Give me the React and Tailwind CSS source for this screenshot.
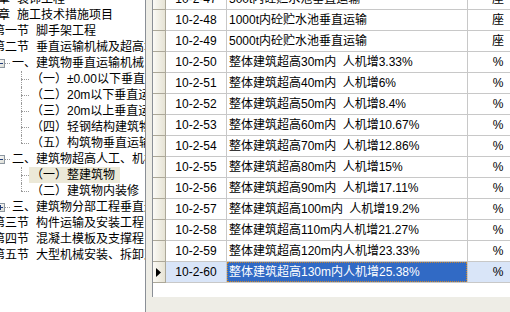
const FONT = "font-['Liberation_Sans','Noto_Sans_CJK_SC',sans-serif]";

const treeRows = [
  { lv: 0, label: '第九章', text: '装饰工程' },
  { lv: 0, label: '第十章', text: '施工技术措施项目' },
  { lv: 1, label: '第一节', text: '脚手架工程' },
  { lv: 1, label: '第二节', text: '垂直运输机械及超高增加费' },
  { lv: 2, text: '一、建筑物垂直运输机械', box: 'minus' },
  { lv: 3, text: '（一）±0.00以下垂直运输' },
  { lv: 3, text: '（二）20m以下垂直运输' },
  { lv: 3, text: '（三）20m以上垂直运输' },
  { lv: 3, text: '（四）轻钢结构建筑物垂直运输' },
  { lv: 3, text: '（五）构筑物垂直运输', last: true },
  { lv: 2, text: '二、建筑物超高人工、机械增加费', box: 'minus' },
  { lv: 3, text: '（一）整建筑物', selected: true },
  { lv: 3, text: '（二）建筑物内装修', last: true },
  { lv: 2, text: '三、建筑物分部工程垂直运输', box: 'plus' },
  { lv: 1, label: '第三节', text: '构件运输及安装工程' },
  { lv: 1, label: '第四节', text: '混凝土模板及支撑程' },
  { lv: 1, label: '第五节', text: '大型机械安装、拆卸及场外运输费' },
];

const gridRows = [
  { code: '10-2-47', name: '500t内砼贮水池垂直运输', unit: '座' },
  { code: '10-2-48', name: '1000t内砼贮水池垂直运输', unit: '座' },
  { code: '10-2-49', name: '5000t内砼贮水池垂直运输', unit: '座' },
  { code: '10-2-50', name: '整体建筑超高30m内 人机增3.33%', unit: '%' },
  { code: '10-2-51', name: '整体建筑超高40m内 人机增6%', unit: '%' },
  { code: '10-2-52', name: '整体建筑超高50m内 人机增8.4%', unit: '%' },
  { code: '10-2-53', name: '整体建筑超高60m内 人机增10.67%', unit: '%' },
  { code: '10-2-54', name: '整体建筑超高70m内 人机增12.86%', unit: '%' },
  { code: '10-2-55', name: '整体建筑超高80m内 人机增15%', unit: '%' },
  { code: '10-2-56', name: '整体建筑超高90m内 人机增17.11%', unit: '%' },
  { code: '10-2-57', name: '整体建筑超高100m内 人机增19.2%', unit: '%' },
  { code: '10-2-58', name: '整体建筑超高110m内人机增21.27%', unit: '%' },
  { code: '10-2-59', name: '整体建筑超高120m内人机增23.33%', unit: '%' },
  { code: '10-2-60', name: '整体建筑超高130m内人机增25.38%', unit: '%', selected: true },
];

function ExpandBox({ type }) {
  return (
    <div className="w-[9px] h-[9px] shrink-0 border border-[#8c96a0] bg-linear-to-br from-white to-[#dcdcd4] flex items-center justify-center relative">
      <div className="w-[5px] h-px bg-[#1e3a78]" />
      {type === 'plus' && <div className="absolute w-px h-[5px] bg-[#1e3a78]" />}
    </div>
  );
}

function TreeRow({ row }) {
  if (row.lv < 2) {
    return (
      <div className={`flex items-center h-[16px] whitespace-nowrap ${row.lv === 0 ? 'pl-[19px]' : 'pl-[38px]'}`}>
        <span className="px-[2px]">
          {row.label}
          <span className="ml-[7px]">{row.text}</span>
        </span>
      </div>
    );
  }

  if (row.lv === 2) {
    return (
      <div className="flex items-center h-[16px] whitespace-nowrap">
        <div className="w-[38px] shrink-0" />
        <div className="w-[19px] shrink-0 flex items-center">
          <div className="w-[5px] shrink-0" />
          <ExpandBox type={row.box} />
          <div className="flex-1 border-t border-dotted border-[#9a9a9a]" />
        </div>
        <span className="px-[2px]">{row.text}</span>
      </div>
    );
  }

  return (
    <div className="flex items-center h-[16px] whitespace-nowrap">
      <div className="w-[57px] shrink-0" />
      <div className="w-[19px] h-full shrink-0 flex flex-col pl-[11px]">
        <div className="h-[8px] border-l border-dotted border-[#9a9a9a]" />
        <div
          className={
            row.last
              ? 'h-[8px] border-t border-dotted border-[#9a9a9a]'
              : 'h-[8px] border-t border-l border-dotted border-[#9a9a9a]'
          }
        />
      </div>
      <span className={row.selected ? 'pl-[2px] pr-[5px] bg-[#ece9d8] leading-[16px]' : 'px-[2px] leading-[16px]'}>
        {row.text}
      </span>
    </div>
  );
}

function GridRow({ row }) {
  const sel = row.selected;
  return (
    <div className="flex h-[21px] whitespace-nowrap">
      <div className="w-[13px] shrink-0 border-r border-b border-[#aca899] bg-linear-to-r from-[#fbfaf6] to-[#e6e3d4] flex items-center pl-[3px]">
        {sel && (
          <svg width="5" height="9" viewBox="0 0 5 9">
            <polygon points="0,0 5,4.5 0,9" fill="#000" />
          </svg>
        )}
      </div>
      <div className={`w-[61px] shrink-0 border-r border-b border-[#c8c8c8] flex items-center justify-center ${sel ? 'bg-[#d9e5f8]' : 'bg-white'}`}>
        {row.code}
      </div>
      <div className={`w-[241px] shrink-0 border-r border-b border-[#c8c8c8] ${sel ? 'bg-white' : 'bg-white'}`}>
        {sel ? (
          <div className="h-full border border-dotted border-[#c8862e] bg-[#316ac5] text-white flex items-center pl-[1px] [word-spacing:3px]">
            {row.name}
          </div>
        ) : (
          <div className="h-full flex items-center pl-[2px] [word-spacing:3px]">{row.name}</div>
        )}
      </div>
      <div className={`w-[60px] shrink-0 border-b border-[#c8c8c8] flex items-center justify-center ${sel ? 'bg-[#d9e5f8]' : 'bg-white'}`}>
        {row.unit}
      </div>
    </div>
  );
}

export default function App() {
  return (
    <div className={`w-[510px] h-[312px] flex overflow-hidden bg-[#eeede6] text-[12px] text-black ${FONT}`}>
      {/* Chapter tree */}
      <div className="w-[146px] h-full shrink-0 bg-white border-r border-[#8a8f96] overflow-hidden">
        <div className="-ml-[47px] -mt-[9px]">
          {treeRows.map((row, i) => (
            <TreeRow key={i} row={row} />
          ))}
        </div>
      </div>

      {/* Splitter */}
      <div className="w-[6px] h-full shrink-0 bg-[#eeede6]" />

      {/* Quota grid */}
      <div className="flex-1 min-w-0 flex flex-col">
        <div className="h-[297px] bg-white border-l border-[#8a8f96] overflow-hidden">
          <div className="-mt-[11px]">
            {gridRows.map((row) => (
              <GridRow key={row.code} row={row} />
            ))}
          </div>
        </div>
      </div>
    </div>
  );
}
